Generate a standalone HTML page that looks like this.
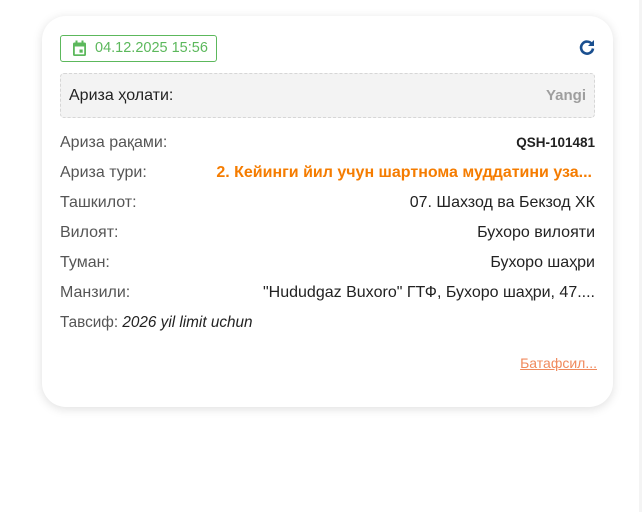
<!DOCTYPE html>
<html><head><meta charset="utf-8"><style>
body{margin:0;width:642px;height:512px;background:#fff;font-family:"Liberation Sans",Arial,sans-serif;position:relative;overflow:hidden}
.edge{position:absolute;left:639px;top:0;width:3px;height:512px;background:#f4f4f4}
.card{position:absolute;left:42px;top:16px;width:571px;height:391px;background:#fff;border-radius:24px;box-shadow:0 2px 10px rgba(0,0,0,.13)}
.date{position:absolute;left:18px;top:19px;width:157px;height:27px;border:1px solid #5cb85c;border-radius:3px;color:#5cb85c;font-size:14.5px;line-height:25px;box-sizing:border-box;padding-left:34px}
.date svg{position:absolute;left:11px;top:4px}
.ref{position:absolute;left:537px;top:23px}
.status{position:absolute;left:18px;top:57px;width:535px;height:45px;background:#f3f3f3;border:1px dashed #d6d6d6;border-radius:4px;box-sizing:border-box;font-size:16px;line-height:43px;padding:0 8px;color:#222}
.status b{float:right;color:#9e9e9e;font-size:15px}
.row{position:absolute;left:18px;width:535px;height:30px;line-height:30px;font-size:16px;color:#555}
.row span{position:absolute;right:0;top:0;color:#222;white-space:nowrap}
.more{position:absolute;right:16px;top:339px;color:#f08a5d;font-size:14px;text-decoration:underline}
</style></head><body>
<div class="edge"></div>
<div class="card">
<div class="date"><svg width="15" height="17" viewBox="0 0 15 17"><rect x="1" y="2.5" width="13" height="13.5" rx="1.5" fill="#5cb85c"/><rect x="2.8" y="6.5" width="9.4" height="7.8" fill="#fff"/><rect x="3.5" y="0.5" width="2" height="3.5" fill="#5cb85c"/><rect x="9.5" y="0.5" width="2" height="3.5" fill="#5cb85c"/><rect x="7.5" y="9.5" width="3.2" height="3.2" fill="#5cb85c"/></svg>04.12.2025 15:56</div>
<svg class="ref" width="16" height="16" viewBox="0 0 16 16"><path d="M13 5.2A6 6 0 1 0 14 9.5" fill="none" stroke="#1a4f8f" stroke-width="2.6"/><path d="M15 1v6H9z" fill="#1a4f8f"/></svg>
<div class="status">Ариза ҳолати:<b>Yangi</b></div>
<div class="row" style="top:112px">Ариза рақами:<span style="font-weight:bold;font-size:13.5px">QSH-101481</span></div>
<div class="row" style="top:142px">Ариза тури:<span style="color:#f57c00;font-weight:bold;right:3px">2. Кейинги йил учун шартнома муддатини уза...</span></div>
<div class="row" style="top:172px">Ташкилот:<span>07. Шахзод ва Бекзод ХК</span></div>
<div class="row" style="top:202px">Вилоят:<span>Бухоро вилояти</span></div>
<div class="row" style="top:232px">Туман:<span>Бухоро шаҳри</span></div>
<div class="row" style="top:262px">Манзили:<span>"Hududgaz Buxoro" ГТФ, Бухоро шаҳри, 47....</span></div>
<div class="row" style="top:292px;font-size:15.3px">Тавсиф: <i style="color:#222">2026 yil limit uchun</i></div>
<div class="more">Батафсил...</div>
</div>
</body></html>
